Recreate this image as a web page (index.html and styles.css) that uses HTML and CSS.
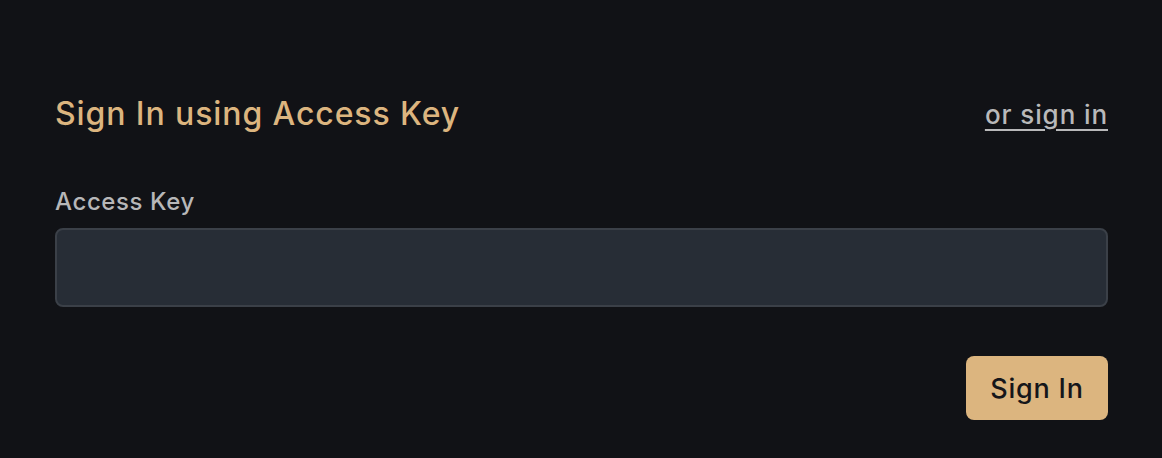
FILE: index.html
```html
<!DOCTYPE html>
<html lang="en">
<head>
  <meta charset="UTF-8" />
  <meta name="viewport" content="width=device-width, initial-scale=1.0" />
  <title>Sign In</title>
  <link rel="stylesheet" href="styles.css">
</head>
<body>
  <div class="signin">
    <div class="signin-head">
      <h1 class="title">Sign In using Access Key</h1>
      <a class="alt-link" href="#">or sign in</a>
    </div>

    <label class="field-label" for="accessKey">Access Key</label>
    <input type="password" id="accessKey" class="field-input" />

    <div class="actions">
      <button class="btn">Sign In</button>
    </div>
  </div>
</body>
</html>
```

FILE: styles.css
```css
body {
  margin: 0;
  background: #111216;
  font-family: 'Inter', sans-serif;
  color: #b7b7b8;
}

.signin {
  padding: 90px 54px 38px 55px;
  display: flex;
  flex-direction: column;
}

.signin-head {
  display: flex;
  justify-content: space-between;
  align-items: center;
  margin-bottom: 48px;
}

.title {
  margin: 0;
  font-size: 32px;
  font-weight: 500;
  letter-spacing: 0.9px;
  color: #dcb57f;
  line-height: 48px;
}

.alt-link {
  color: #b9b9ba;
  font-size: 26px;
  font-weight: 500;
  letter-spacing: 0.9px;
  text-decoration: underline;
  text-underline-offset: 5px;
  text-decoration-thickness: 2px;
}

.field-label {
  font-size: 24px;
  font-weight: 500;
  letter-spacing: 0.6px;
  line-height: 32px;
  margin-bottom: 10px;
}

.field-input {
  height: 79px;
  box-sizing: border-box;
  background: #272d36;
  border: 2px solid #3b4048;
  border-radius: 8px;
  color: #fff;
  font-size: 20px;
  padding: 0 16px;
  outline: none;
}

.actions {
  display: flex;
  justify-content: flex-end;
  margin-top: 49px;
}

.btn {
  width: 142px;
  height: 64px;
  background: #dcb57f;
  color: #15161a;
  border: none;
  border-radius: 8px;
  font-family: inherit;
  font-size: 27px;
  font-weight: 500;
  letter-spacing: 0.8px;
  cursor: pointer;
}
```
